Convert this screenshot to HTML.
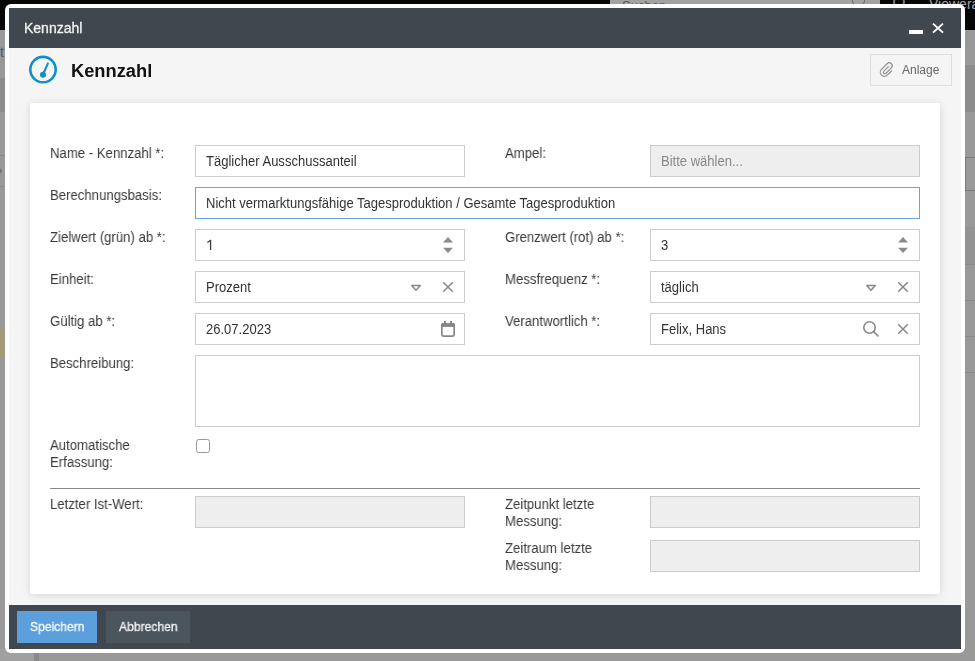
<!DOCTYPE html>
<html><head><meta charset="utf-8">
<style>
*{box-sizing:border-box;margin:0;padding:0}
html,body{width:975px;height:661px;overflow:hidden}
body{position:relative;background:#999;font-family:"Liberation Sans",sans-serif;color:#333}
.a{position:absolute;will-change:transform}
.bg{position:absolute}
.lbl{position:absolute;will-change:transform;font-size:14px;line-height:17px;color:#3a3a3a;white-space:nowrap;transform:scaleX(.94);transform-origin:0 0}
.fld{position:absolute;will-change:transform;height:32px;border:1px solid #ccc;background:#fff;font-size:14px;line-height:30px;padding-left:10px;color:#333;white-space:nowrap}
.t{display:inline-block;transform:scaleX(.93);transform-origin:0 0}
.dis{background:#eee}
.ic{position:absolute}
.btn{font-size:13px;line-height:32px;white-space:nowrap;transform:scaleX(.93);transform-origin:0 0;-webkit-text-stroke:0.35px currentColor}
</style></head><body>
<!-- background app behind overlay -->
<div class="bg" style="left:0;top:0;width:975px;height:30px;background:#060606"></div>
<div class="bg" style="left:610px;top:0;width:270px;height:10px;background:#a2a2a2"></div>
<div class="bg" style="left:622px;top:-2px;font-size:13px;line-height:16px;color:#5a5a5a">Suchen</div>
<div class="bg" style="left:852px;top:-6px;width:13px;height:13px;border:1.5px solid #666;border-radius:50%"></div>
<div class="bg" style="left:893px;top:-4px;width:12px;height:12px;border:2px solid #777;border-radius:50%"></div>
<div class="bg" style="left:929px;top:-5px;font-size:14px;line-height:18px;color:#a0a0a0">Viewerarea</div>
<div class="bg" style="left:0;top:78px;width:9px;height:34px;background:#8c8c8c"></div>
<div class="bg" style="left:0;top:155px;width:9px;height:1px;background:#888"></div>
<div class="bg" style="left:0;top:186px;width:9px;height:1px;background:#888"></div>
<div class="bg" style="left:-2px;top:163px;font-size:14px;line-height:14px;color:#666">&#x203A;</div>
<div class="bg" style="left:0;top:327px;width:9px;height:30px;background:#a2987c"></div>
<div class="bg" style="left:0;top:44px;font-size:14px;line-height:16px;color:#3c5a7a">t</div>
<div class="bg" style="left:965px;top:65px;width:10px;height:47px;background:#8c8c8c"></div>
<div class="bg" style="left:965px;top:157px;width:10px;height:34px;border:1px solid #7a7a7a;border-right:none;background:#9a9a9a"></div>
<div class="bg" style="left:965px;top:227px;width:10px;height:37px;background:#939393"></div>
<div class="bg" style="left:965px;top:264px;width:10px;height:1px;background:#8a8a8a"></div>
<div class="bg" style="left:965px;top:300px;width:10px;height:1px;background:#8a8a8a"></div>
<div class="bg" style="left:965px;top:336px;width:10px;height:1px;background:#8a8a8a"></div>
<div class="bg" style="left:965px;top:372px;width:10px;height:1px;background:#8a8a8a"></div>
<div class="bg" style="left:0;top:649px;width:34px;height:12px;background:#a0a0a0"></div>
<div class="bg" style="left:34px;top:649px;width:5px;height:12px;background:#8a8a8a"></div>

<!-- dialog -->
<div class="a" style="left:5px;top:4px;width:960px;height:649px;background:#fff;border-radius:6px"></div>
<div class="a" style="left:9px;top:8px;width:952px;height:40px;background:#40474e"></div>
<div class="a" style="left:9px;top:48px;width:952px;height:557px;background:#f5f5f5"></div>
<div class="a" style="left:9px;top:605px;width:952px;height:44px;background:#40474e"></div>

<div class="a" style="left:24px;top:8px;height:40px;line-height:40px;font-size:14px;color:#f2f2f2;-webkit-text-stroke:0.3px #f2f2f2">Kennzahl</div>
<!-- minimize / close -->
<div class="a" style="left:909px;top:30px;width:14px;height:4px;background:#fff"></div>
<svg class="ic" style="left:930px;top:21px" width="16" height="14" viewBox="0 0 16 14"><path d="M3 2.6 L13 11.6 M13 2.6 L3 11.6" stroke="#fff" stroke-width="1.9"/></svg>

<!-- gauge icon -->
<svg class="ic" style="left:27px;top:54px" width="32" height="32" viewBox="0 0 32 32">
<circle cx="16" cy="15.6" r="12.7" fill="none" stroke="#118fcc" stroke-width="2.6"/>
<path d="M16 20.5 L20.9 9.4" stroke="#118fcc" stroke-width="2.1" stroke-linecap="round"/>
<circle cx="16" cy="20.8" r="3" fill="#118fcc"/>
</svg>
<div class="a" style="left:71px;top:59px;line-height:24px;font-size:18.3px;font-weight:bold;color:#111">Kennzahl</div>

<!-- Anlage button -->
<div class="a" style="left:870px;top:54px;width:82px;height:32px;border:1px solid #ddd;background:#f5f5f5"></div>
<svg class="ic" style="left:877px;top:60px" width="20" height="20" viewBox="0 0 20 20">
<path transform="translate(9.8 9.9) rotate(45)" d="M4.14 -2.6 L4.14 3.4 A4.14 4.14 0 0 1 -4.14 3.4 L-4.14 -4.57 A2.98 2.98 0 0 1 1.83 -4.57 L1.83 2.9 A1.54 1.54 0 0 1 -1.25 2.9 L-1.25 -3.46" fill="none" stroke="#8c8c8c" stroke-width="1.1" stroke-linecap="round"/>
</svg>
<div class="a" style="left:902px;top:54px;line-height:32px;font-size:12px;color:#666">Anlage</div>

<!-- panel -->
<div class="a" style="left:30px;top:103px;width:910px;height:491px;background:#fff;border-radius:2px;box-shadow:0 1px 9px rgba(0,0,0,0.13)"></div>

<!-- labels -->
<div class="lbl" style="left:50px;top:145px">Name - Kennzahl *:</div>
<div class="lbl" style="left:50px;top:187px">Berechnungsbasis:</div>
<div class="lbl" style="left:50px;top:229px">Zielwert (grün) ab *:</div>
<div class="lbl" style="left:50px;top:271px">Einheit:</div>
<div class="lbl" style="left:50px;top:313px">Gültig ab *:</div>
<div class="lbl" style="left:50px;top:355px">Beschreibung:</div>
<div class="lbl" style="left:50px;top:437px">Automatische<br>Erfassung:</div>
<div class="lbl" style="left:50px;top:496px">Letzter Ist-Wert:</div>

<div class="lbl" style="left:505px;top:145px">Ampel:</div>
<div class="lbl" style="left:505px;top:229px">Grenzwert (rot) ab *:</div>
<div class="lbl" style="left:505px;top:271px">Messfrequenz *:</div>
<div class="lbl" style="left:505px;top:313px">Verantwortlich *:</div>
<div class="lbl" style="left:505px;top:496px">Zeitpunkt letzte<br>Messung:</div>
<div class="lbl" style="left:505px;top:540px">Zeitraum letzte<br>Messung:</div>

<!-- fields -->
<div class="fld" style="left:195px;top:145px;width:270px"><span class="t">Täglicher Ausschussanteil</span></div>
<div class="fld dis" style="left:650px;top:145px;width:270px;color:#888"><span class="t">Bitte wählen...</span></div>
<div class="fld" style="left:195px;top:187px;width:725px;border-color:#66a6de"><span class="t">Nicht vermarktungsfähige Tagesproduktion / Gesamte Tagesproduktion</span></div>
<div class="fld" style="left:195px;top:229px;width:270px"></div>
<svg class="ic" style="left:204px;top:237px" width="10" height="16" viewBox="0 0 10 16"><path d="M3.4 5.6 L6.6 3.3 V12.9" fill="none" stroke="#3c3c3c" stroke-width="1.25" stroke-linejoin="round"/></svg>
<div class="fld" style="left:650px;top:229px;width:270px"><span class="t">3</span></div>
<div class="fld" style="left:195px;top:271px;width:270px"><span class="t">Prozent</span></div>
<div class="fld" style="left:650px;top:271px;width:270px"><span class="t">täglich</span></div>
<div class="fld" style="left:195px;top:313px;width:270px"><span class="t">26.07.2023</span></div>
<div class="fld" style="left:650px;top:313px;width:270px"><span class="t">Felix, Hans</span></div>
<div class="fld" style="left:195px;top:355px;width:725px;height:72px"></div>

<!-- spinners -->
<svg class="ic" style="left:440px;top:234px" width="16" height="22" viewBox="0 0 16 22"><path d="M3 8.5 L13 8.5 L8 3 Z M3 13.7 L13 13.7 L8 19 Z" fill="#8a8a8a"/></svg>
<svg class="ic" style="left:895px;top:234px" width="16" height="22" viewBox="0 0 16 22"><path d="M3 8.5 L13 8.5 L8 3 Z M3 13.7 L13 13.7 L8 19 Z" fill="#8a8a8a"/></svg>

<!-- dropdown triangles + clear -->
<svg class="ic" style="left:408px;top:281px" width="16" height="12" viewBox="0 0 16 12"><path d="M3.7 4.5 L12.3 4.5 L8 9.2 Z" fill="none" stroke="#888" stroke-width="1.5" stroke-linejoin="round"/></svg>
<svg class="ic" style="left:440px;top:279px" width="16" height="16" viewBox="0 0 16 16"><path d="M3.2 3.2 L12.8 12.8 M12.8 3.2 L3.2 12.8" stroke="#888" stroke-width="1.5"/></svg>
<svg class="ic" style="left:863px;top:281px" width="16" height="12" viewBox="0 0 16 12"><path d="M3.7 4.5 L12.3 4.5 L8 9.2 Z" fill="none" stroke="#888" stroke-width="1.5" stroke-linejoin="round"/></svg>
<svg class="ic" style="left:895px;top:279px" width="16" height="16" viewBox="0 0 16 16"><path d="M3.2 3.2 L12.8 12.8 M12.8 3.2 L3.2 12.8" stroke="#888" stroke-width="1.5"/></svg>

<!-- calendar -->
<svg class="ic" style="left:439px;top:319px" width="18" height="20" viewBox="0 0 18 20">
<rect x="2.85" y="4.85" width="12.3" height="12.3" rx="1.8" fill="none" stroke="#888" stroke-width="1.7"/>
<rect x="2" y="4" width="14" height="3.8" rx="1.8" fill="#888"/>
<rect x="2" y="6" width="14" height="1.8" fill="#888"/>
<rect x="5" y="2" width="2" height="3" fill="#888"/>
<rect x="11" y="2" width="2" height="3" fill="#888"/>
</svg>

<!-- search + clear -->
<svg class="ic" style="left:860px;top:318px" width="22" height="22" viewBox="0 0 22 22">
<circle cx="9.5" cy="9.5" r="5.7" fill="none" stroke="#888" stroke-width="1.6"/>
<path d="M13.6 13.6 L18.5 18.5" stroke="#888" stroke-width="1.6"/>
</svg>
<svg class="ic" style="left:895px;top:321px" width="16" height="16" viewBox="0 0 16 16"><path d="M3.2 3.2 L12.8 12.8 M12.8 3.2 L3.2 12.8" stroke="#888" stroke-width="1.5"/></svg>

<!-- checkbox -->
<div class="a" style="left:195.6px;top:439px;width:14.4px;height:14px;border:1.5px solid #999;border-radius:2.6px;background:#fff"></div>

<!-- separator -->
<div class="a" style="left:50px;top:488px;width:870px;height:1px;background:#888"></div>

<div class="fld dis" style="left:195px;top:496px;width:270px"></div>
<div class="fld dis" style="left:650px;top:496px;width:270px"></div>
<div class="fld dis" style="left:650px;top:540px;width:270px"></div>

<!-- footer buttons -->
<div class="a" style="left:17px;top:611px;width:80px;height:32px;background:#5b9fdc"></div><div class="a btn" style="left:30px;top:611px;color:#f4f8fc">Speichern</div>
<div class="a" style="left:106px;top:611px;width:84px;height:32px;background:#4b555d"></div><div class="a btn" style="left:119px;top:611px;color:#eef0f1">Abbrechen</div>
</body></html>
